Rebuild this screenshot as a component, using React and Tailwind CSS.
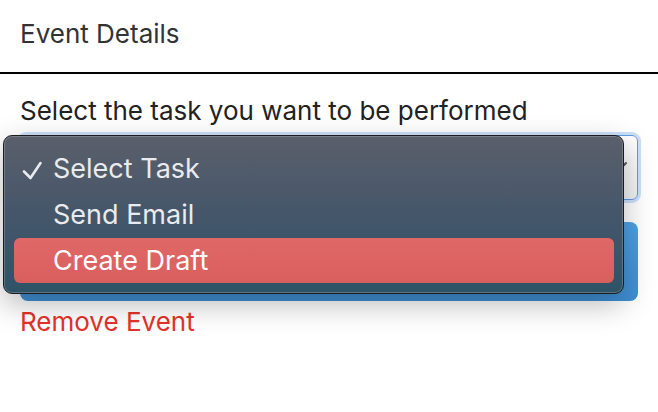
import React from "react";

export default function App() {
  return (
    <div className="relative h-[412px] w-[658px] overflow-hidden bg-white font-['Inter',sans-serif]">
      <div className="border-b-2 border-black px-5 pb-[22px] pt-[18px] text-[26px] leading-[32px] text-[#333333]">
        Event Details
      </div>
      <div className="px-5 pt-[21px]">
        <label className="block text-[26px] leading-[32px] text-[#222222]">
          Select the task you want to be performed
        </label>
        <div className="relative mt-2 h-[65px] rounded-[6px] border border-[#5d9de4] bg-gradient-to-b from-white to-[#f2f2f2] shadow-[0_0_0_3px_rgba(125,180,240,0.4)]">
          <svg className="absolute right-[9px] top-[25px] h-[12px] w-[18px]" viewBox="0 0 18 12">
            <path d="M1.5 2 L8.8 9.5 L16 2" fill="none" stroke="#555555" strokeWidth="2" strokeLinecap="round" strokeLinejoin="round" />
          </svg>
        </div>
        <div className="mt-[22px] h-[79px] rounded-lg bg-gradient-to-b from-[#4ea2e5] to-[#3f8fd5]" />
        <div className="mt-[5px] text-[26px] leading-[32px] text-[#e5322a]">Remove Event</div>
      </div>

      <div className="absolute left-[3px] top-[135px] h-[159px] w-[621px] rounded-[9px] border border-[#1c1c1c] bg-gradient-to-b from-[#5a5f6b] via-[#45566a] to-[#2d5367] pl-[10px] pr-[9px] pt-[10px] shadow-[inset_0_0_0_1px_rgba(255,255,255,0.2),0_10px_30px_rgba(0,0,0,0.28)]">
        <div className="relative h-[46px] pl-[39px] text-[27px] leading-[46px] text-[#e9ebee]">
          <svg className="absolute left-0 top-0 h-[46px] w-[39px]" viewBox="0 0 39 46">
            <path d="M10 25.5 L16.5 32 L26.5 17" fill="none" stroke="#e9ebee" strokeWidth="2.6" strokeLinecap="round" strokeLinejoin="round" />
          </svg>
          Select Task
        </div>
        <div className="h-[46px] pl-[39px] text-[27px] leading-[46px] text-[#e9ebee]">Send Email</div>
        <div className="h-[45px] rounded-[6px] bg-gradient-to-b from-[#df6867] to-[#d95f5d] pl-[39px] text-[27px] leading-[46px] text-white">
          Create Draft
        </div>
      </div>
    </div>
  );
}
